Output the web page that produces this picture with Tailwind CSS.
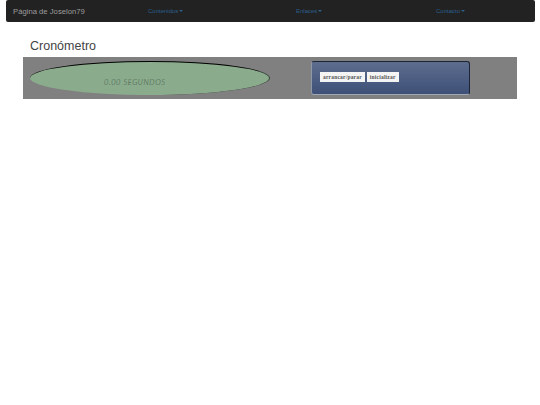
<!DOCTYPE html>
<html lang="es">
<head>
<meta charset="utf-8">
<title>Cronómetro</title>
<script src="https://cdn.jsdelivr.net/npm/@tailwindcss/browser@4"></script>
</head>
<body class="bg-white font-['Liberation_Sans',sans-serif]">
<nav class="mx-[6px] h-[22px] w-[529px] flex items-center rounded-[2px] bg-[#222222] text-[6px] text-[#2b5f8c]">
  <span class="ml-[7px] w-[135px] pt-[1px] text-[7.7px] text-[#9d9d9d]">Página de Joselon79</span>
  <a class="w-[148px] flex items-center gap-[1px]">Contenidos<span class="border-x-[2px] border-t-[2px] border-x-transparent border-t-[#2b5f8c]"></span></a>
  <a class="w-[140px] flex items-center gap-[1px]">Enlaces<span class="border-x-[2px] border-t-[2px] border-x-transparent border-t-[#2b5f8c]"></span></a>
  <a class="flex items-center gap-[1px]">Contacto<span class="border-x-[2px] border-t-[2px] border-x-transparent border-t-[#2b5f8c]"></span></a>
</nav>
<main class="ml-[23px] w-[494px]">
  <h1 class="pl-[7px] pt-[17px] h-[35px] text-[12.5px] leading-[15px] text-[#444]">Cronómetro</h1>
  <section class="h-[42px] bg-[#808080] flex items-center pl-[7px]">
    <div class="w-[240px] h-[34px] rounded-[50%] bg-[#8aab8c] border-t border-r border-t-black border-r-black/60 flex items-center shrink-0 pl-[74px] pt-[8px]">
      <span class="font-['Lato',sans-serif] font-light italic text-[7.5px] tracking-[0.55px] text-[#3f5646]">0.00 SEGUNDOS</span>
    </div>
    <div class="ml-[41px] w-[159px] h-[34px] rounded-[3px] bg-gradient-to-b from-[#5d6d8e] to-[#3f5078] border-t border-r border-t-[#1c2438] border-r-[#1c2438] border-l border-b border-l-[#8f98a8] border-b-[#a0a8b4] flex items-center pl-[8px] gap-[2px] pb-[3px]">
      <button class="h-[10px] px-[3px] bg-[#f4f4f4] font-['Liberation_Serif',serif] font-bold text-[5.5px] leading-[10px] tracking-[0.2px] text-[#555]">arrancar/parar</button>
      <button class="h-[10px] px-[3px] bg-[#f4f4f4] font-['Liberation_Serif',serif] font-bold text-[5.5px] leading-[10px] tracking-[0.2px] text-[#555]">inicializar</button>
    </div>
  </section>
</main>
</body>
</html>
